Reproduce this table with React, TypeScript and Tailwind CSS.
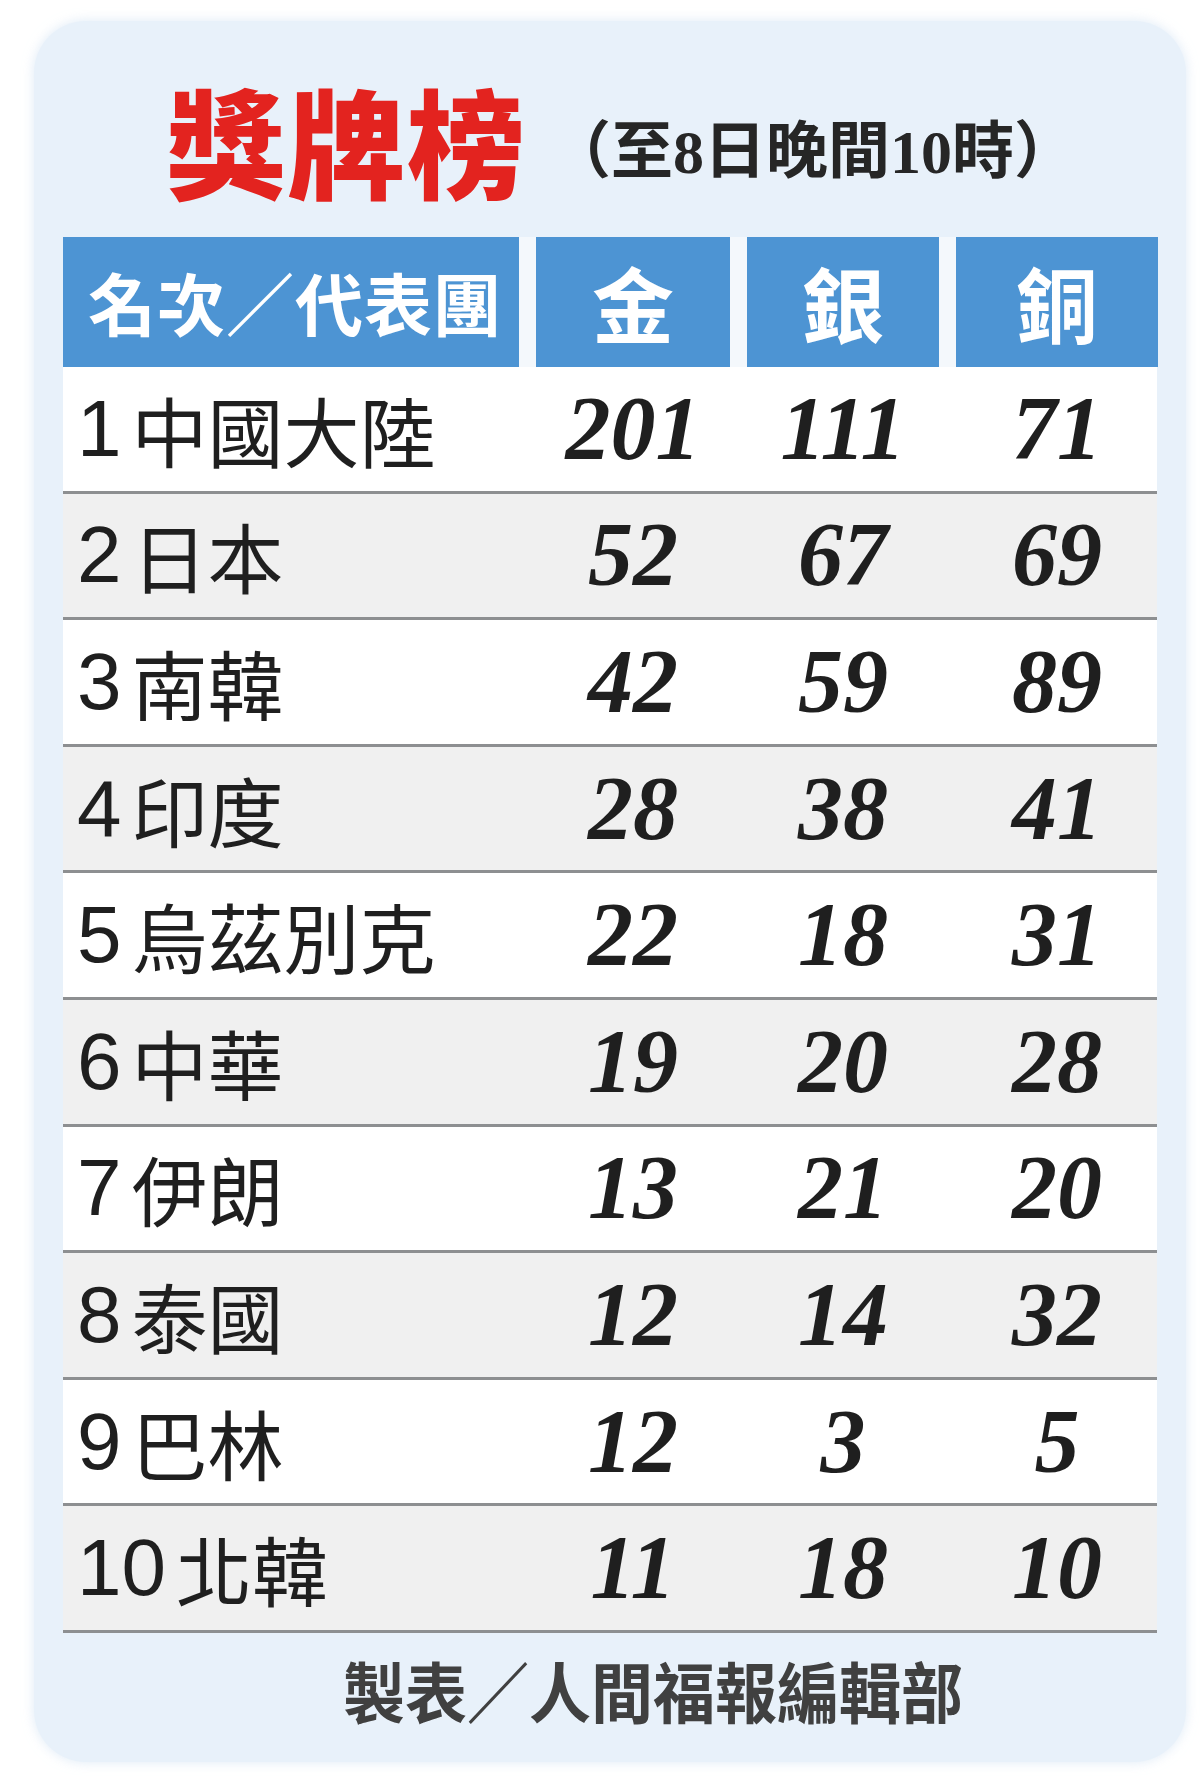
import React from "react";

const rows: [string, string, string, string, string][] = [
  ["1", "中國大陸", "201", "111", "71"],
  ["2", "日本", "52", "67", "69"],
  ["3", "南韓", "42", "59", "89"],
  ["4", "印度", "28", "38", "41"],
  ["5", "烏茲別克", "22", "18", "31"],
  ["6", "中華", "19", "20", "28"],
  ["7", "伊朗", "13", "21", "20"],
  ["8", "泰國", "12", "14", "32"],
  ["9", "巴林", "12", "3", "5"],
  ["10", "北韓", "11", "18", "10"],
];

function HeadCell({ children }: { children: React.ReactNode }) {
  return (
    <div className="bg-[#4d94d3] text-white font-bold text-[82px] flex items-center justify-center leading-none font-['Noto_Sans_CJK_TC',sans-serif]">
      {children}
    </div>
  );
}

function NumCell({ children }: { children: React.ReactNode }) {
  return (
    <div className="text-center text-[90px] font-bold italic leading-none text-[#1f1f1f] font-['Liberation_Serif',serif]">
      {children}
    </div>
  );
}

export default function App() {
  return (
    <div className="w-[1200px] h-[1789px] bg-white pt-[21px] pl-[34px]">
      <div className="w-[1152px] h-[1741px] rounded-[52px] bg-[#e8f1fa] flex flex-col px-[29px] shadow-[0_0_12px_rgba(200,220,240,0.6)]">
        <div className="h-[216px] flex items-center pl-[104px]">
          <div className="text-[#e3231f] text-[118px] font-black leading-none tracking-[2px] mt-[20px] font-['Noto_Sans_CJK_TC',sans-serif]">
            獎牌榜
          </div>
          <div className="text-[#262626] text-[62px] font-bold leading-none ml-[22px] mt-[46px] font-['Liberation_Serif','Noto_Sans_CJK_TC',serif]">
            （至8日晚間10時）
          </div>
        </div>
        <div className="grid grid-cols-[456px_194px_192px_202px] gap-x-[17px] bg-[#f4f8fc] h-[130px]">
          <div className="bg-[#4d94d3] text-white font-bold text-[68px] flex items-center justify-center leading-none tracking-[1px] pl-[8px] font-['Noto_Sans_CJK_TC',sans-serif]">
            名次／代表團
          </div>
          <HeadCell>金</HeadCell>
          <HeadCell>銀</HeadCell>
          <HeadCell>銅</HeadCell>
        </div>
        <div className="flex flex-col">
          {rows.map((r, i) => (
            <div
              key={i}
              className={
                "grid grid-cols-[456px_194px_192px_202px] gap-x-[17px] h-[126.6px] border-b-[3px] border-[#8d8f91] items-center " +
                (i % 2 === 0 ? "bg-white" : "bg-[#f0f0f0]")
              }
            >
              <div className="flex items-center pl-[14px] text-[#1f1f1f] leading-none">
                <span className="text-[80px] mr-[10px] font-['Liberation_Sans_Narrow','Liberation_Sans',sans-serif]">
                  {r[0]}
                </span>
                <span className="text-[76px] font-normal font-['Noto_Sans_CJK_TC',sans-serif]">{r[1]}</span>
              </div>
              <NumCell>{r[2]}</NumCell>
              <NumCell>{r[3]}</NumCell>
              <NumCell>{r[4]}</NumCell>
            </div>
          ))}
        </div>
        <div className="flex-1 flex justify-center pt-[24px] pl-[86px]">
          <div className="text-[#404040] text-[62px] font-semibold leading-none scale-y-[1.06] origin-top font-['Noto_Sans_CJK_TC',sans-serif]">
            製表／人間福報編輯部
          </div>
        </div>
      </div>
    </div>
  );
}
